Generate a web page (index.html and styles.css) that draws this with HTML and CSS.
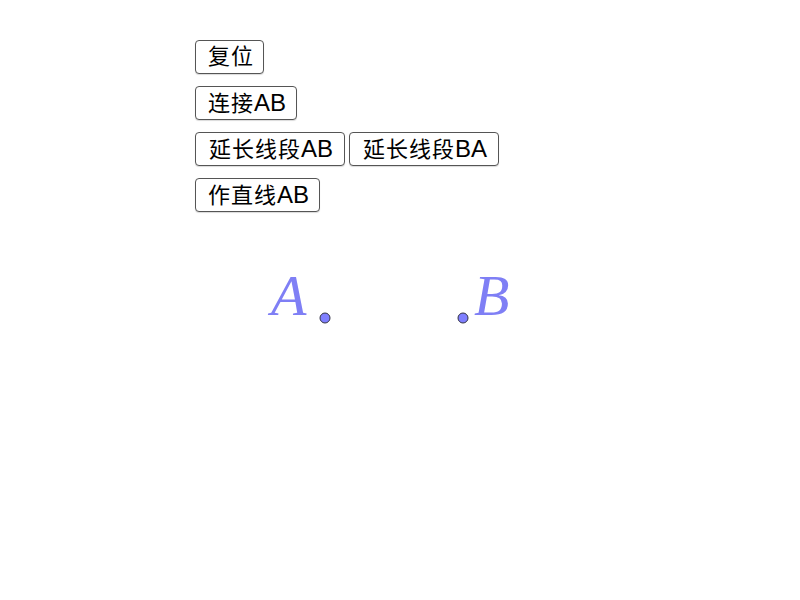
FILE: index.html
```html
<!DOCTYPE html>
<html>
<head>
<meta charset="utf-8">
<link rel="stylesheet" href="styles.css">
</head>
<body>
<div class="stage">
  <div class="buttons">
    <div class="row"><button class="btn btn-narrow">复位</button></div>
    <div class="row"><button class="btn">连接<span class="lat">AB</span></button></div>
    <div class="row"><button class="btn btn-wide">延长线段<span class="lat">AB</span></button><button class="btn btn-wide">延长线段<span class="lat">BA</span></button></div>
    <div class="row"><button class="btn">作直线<span class="lat">AB</span></button></div>
  </div>
  <svg class="canvas" width="800" height="600" viewBox="0 0 800 600">
    <text class="label" x="271" y="315">A</text>
    <text class="label" x="474" y="315">B</text>
    <circle class="pt" cx="325" cy="318" r="5"/>
    <circle class="pt" cx="463" cy="318" r="5"/>
  </svg>
</div>
</body>
</html>
```
FILE: styles.css
```css
html, body {
  margin: 0;
  padding: 0;
  background: #ffffff;
}
.stage {
  position: relative;
  width: 800px;
  height: 600px;
  overflow: hidden;
}
.buttons {
  display: flex;
  flex-direction: column;
  gap: 12px;
  padding: 40px 0 0 195px;
}
.row {
  display: flex;
  gap: 4px;
}
.btn {
  height: 34px;
  padding: 0 10px 0 12px;
  margin: 0;
  border: 1px solid #555555;
  border-radius: 4px;
  background: #ffffff;
  box-shadow: 0 1px 1px rgba(0,0,0,0.15);
  font-family: "Liberation Sans", "Noto Sans CJK SC", sans-serif;
  font-size: 22px;
  line-height: 32px;
  letter-spacing: 1px;
  color: #000000;
  white-space: nowrap;
}
.lat {
  font-size: 24px;
  letter-spacing: 0;
}
.btn-narrow {
  padding: 0 9px 0 12px;
}
.btn-wide {
  padding: 0 11px 0 13px;
}
.canvas {
  position: absolute;
  left: 0;
  top: 0;
}
.label {
  font-family: "Liberation Serif", "DejaVu Serif", serif;
  font-style: italic;
  font-size: 58px;
  fill: #7f7ff5;
}
.pt {
  fill: #7f7fff;
  stroke: #333344;
  stroke-width: 1;
}
```
